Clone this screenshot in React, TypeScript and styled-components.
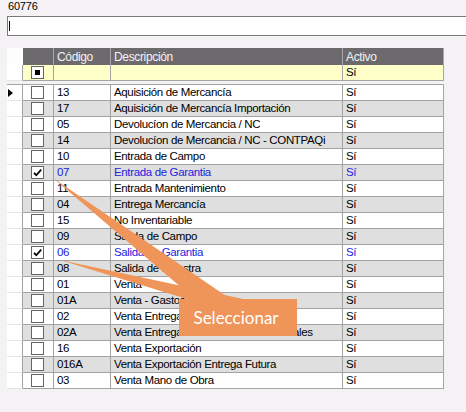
import React from 'react';
import styled, { createGlobalStyle } from 'styled-components';

const GlobalStyle = createGlobalStyle`
  html, body {
    margin: 0;
    padding: 0;
    overflow: hidden;
    background: #f5f2f5;
  }
  body {
    font-family: "Liberation Sans", Arial, sans-serif;
  }
`;

const COLUMNS = '16px 31px 57px 232px 101px';
const LINE = '#a3a3a3';
const CALLOUT = '#f0955a';

// Page frame
const Page = styled.div`
  position: relative;
  width: 466px;
  height: 412px;
  padding-left: 7px;
  box-sizing: border-box;
  overflow: hidden;
`;

const CodeLabel = styled.div`
  height: 13px;
  padding-left: 1px;
  font-size: 11px;
  line-height: 13px;
  letter-spacing: -0.2px;
  color: #000;
`;

const SearchBox = styled.div`
  margin-top: 3px;
  width: 470px;
  height: 20px;
  box-sizing: border-box;
  border: 1px solid #7a7a7a;
  background: #fff;
  padding: 4px 0 0 1px;
`;

const Caret = styled.span`
  display: block;
  width: 1px;
  height: 10px;
  background: #000;
`;

// Grid
const Grid = styled.div`
  margin-top: 12px;
  width: 437px;
  font-size: 11.5px;
  letter-spacing: -0.35px;
`;

const Row = styled.div<{ $height: number }>`
  display: grid;
  grid-template-columns: ${COLUMNS};
  height: ${props => props.$height}px;
`;

const HeaderCorner = styled.div`
  background: #fdfdfd;
`;

const HeaderCell = styled.div`
  box-sizing: border-box;
  background: #6d6a6d;
  color: #f2f2f2;
  border-right: 1px solid #a9a6a9;
  padding: 2px 0 0 3px;
  line-height: 15px;
  font-size: 12px;
  white-space: nowrap;
`;

const RowHeader = styled.div`
  box-sizing: border-box;
  display: flex;
  align-items: center;
  background: #fff;
  border-right: 1px solid ${LINE};
  border-bottom: 1px solid #e6e6e6;
`;

const Cell = styled.div<{ $bg: string; $color?: string }>`
  box-sizing: border-box;
  display: flex;
  align-items: center;
  background: ${props => props.$bg};
  color: ${props => props.$color || '#000'};
  border-right: 1px solid ${LINE};
  border-bottom: 1px solid ${LINE};
  padding-left: 3px;
  line-height: 15px;
  white-space: nowrap;
  overflow: hidden;
`;

const CheckCell = styled(Cell)`
  padding-left: 8px;
`;

const Gap = styled.div`
  height: 3px;
`;

const DataBody = styled.div`
  border-top: 1px solid ${LINE};
`;

const CurrentMark = styled.span`
  width: 0;
  height: 0;
  margin-left: 1px;
  border-top: 4.5px solid transparent;
  border-bottom: 4.5px solid transparent;
  border-left: 5px solid #000;
`;

const Box = styled.span`
  position: relative;
  display: block;
  width: 13px;
  height: 13px;
  box-sizing: border-box;
  border: 1px solid #646464;
  background: #fff;
`;

const Indeterminate = styled.span`
  position: absolute;
  left: 3px;
  top: 3px;
  width: 5px;
  height: 5px;
  background: #000;
`;

const CheckSvg = styled.svg`
  position: absolute;
  left: -1px;
  top: -1px;
`;

// Callout drawn over the grid
const CalloutShape = styled.svg`
  position: absolute;
  left: 0;
  top: 0;
  pointer-events: none;
`;

const CalloutLabel = styled.div`
  position: absolute;
  left: 179px;
  top: 299px;
  width: 118px;
  height: 37px;
  display: flex;
  align-items: center;
  justify-content: center;
  background: ${CALLOUT};
  color: #fff;
  font-family: Lato, "Open Sans", sans-serif;
  font-size: 17px;
  padding-right: 4px;
  box-sizing: border-box;
`;

interface Concept {
  code: string;
  name: string;
  checked?: boolean;
}

const concepts: Concept[] = [
  { code: '13', name: 'Aquisición de Mercancía' },
  { code: '17', name: 'Aquisición de Mercancía Importación' },
  { code: '05', name: 'Devolucíon de Mercancia / NC' },
  { code: '14', name: 'Devolucíon de Mercancia / NC - CONTPAQi' },
  { code: '10', name: 'Entrada de Campo' },
  { code: '07', name: 'Entrada de Garantia', checked: true },
  { code: '11', name: 'Entrada Mantenimiento' },
  { code: '04', name: 'Entrega Mercancía' },
  { code: '15', name: 'No Inventariable' },
  { code: '09', name: 'Salida de Campo' },
  { code: '06', name: 'Salida de Garantia', checked: true },
  { code: '08', name: 'Salida de Muestra' },
  { code: '01', name: 'Venta' },
  { code: '01A', name: 'Venta - Gastos Generales' },
  { code: '02', name: 'Venta Entrega Futura' },
  { code: '02A', name: 'Venta Entrega Futura - Gastos Generales' },
  { code: '16', name: 'Venta Exportación' },
  { code: '016A', name: 'Venta Exportación Entrega Futura' },
  { code: '03', name: 'Venta Mano de Obra' },
];

const CheckBox: React.FC<{ checked?: boolean; indeterminate?: boolean }> = ({ checked, indeterminate }) => (
  <Box>
    {indeterminate && <Indeterminate />}
    {checked && (
      <CheckSvg width="13" height="13" viewBox="0 0 13 13">
        <path d="M3 6.8 L5.3 9.2 L10.2 3.6" fill="none" stroke="#000" strokeWidth="1.7" />
      </CheckSvg>
    )}
  </Box>
);

const App: React.FC = () => {
  return (
    <Page>
      <GlobalStyle />
      <CodeLabel>60776</CodeLabel>
      <SearchBox>
        <Caret />
      </SearchBox>

      <Grid>
        <Row $height={17}>
          <HeaderCorner />
          <HeaderCell />
          <HeaderCell>Código</HeaderCell>
          <HeaderCell>Descripción</HeaderCell>
          <HeaderCell>Activo</HeaderCell>
        </Row>

        <Row $height={16}>
          <RowHeader />
          <CheckCell $bg="#ffffca">
            <CheckBox indeterminate />
          </CheckCell>
          <Cell $bg="#ffffca" />
          <Cell $bg="#ffffca" />
          <Cell $bg="#ffffca">Sí</Cell>
        </Row>

        <Gap />

        <DataBody>
          {concepts.map((item, index) => {
            const bg = index % 2 === 1 ? '#dfdfdf' : '#fff';
            const color = item.checked ? '#2323dd' : '#000';
            return (
              <Row $height={16} key={item.code}>
                <RowHeader>{index === 0 && <CurrentMark />}</RowHeader>
                <CheckCell $bg={bg}>
                  <CheckBox checked={item.checked} />
                </CheckCell>
                <Cell $bg={bg} $color={color}>{item.code}</Cell>
                <Cell $bg={bg} $color={color}>{item.name}</Cell>
                <Cell $bg={bg} $color={color}>Sí</Cell>
              </Row>
            );
          })}
        </DataBody>
      </Grid>

      <CalloutShape width="466" height="412" viewBox="0 0 466 412">
        <polygon points="53,178 196,300 232,300" fill={CALLOUT} />
        <polygon points="60,260 190,300 248,300" fill={CALLOUT} />
      </CalloutShape>
      <CalloutLabel>Seleccionar</CalloutLabel>
    </Page>
  );
};

export default App;
